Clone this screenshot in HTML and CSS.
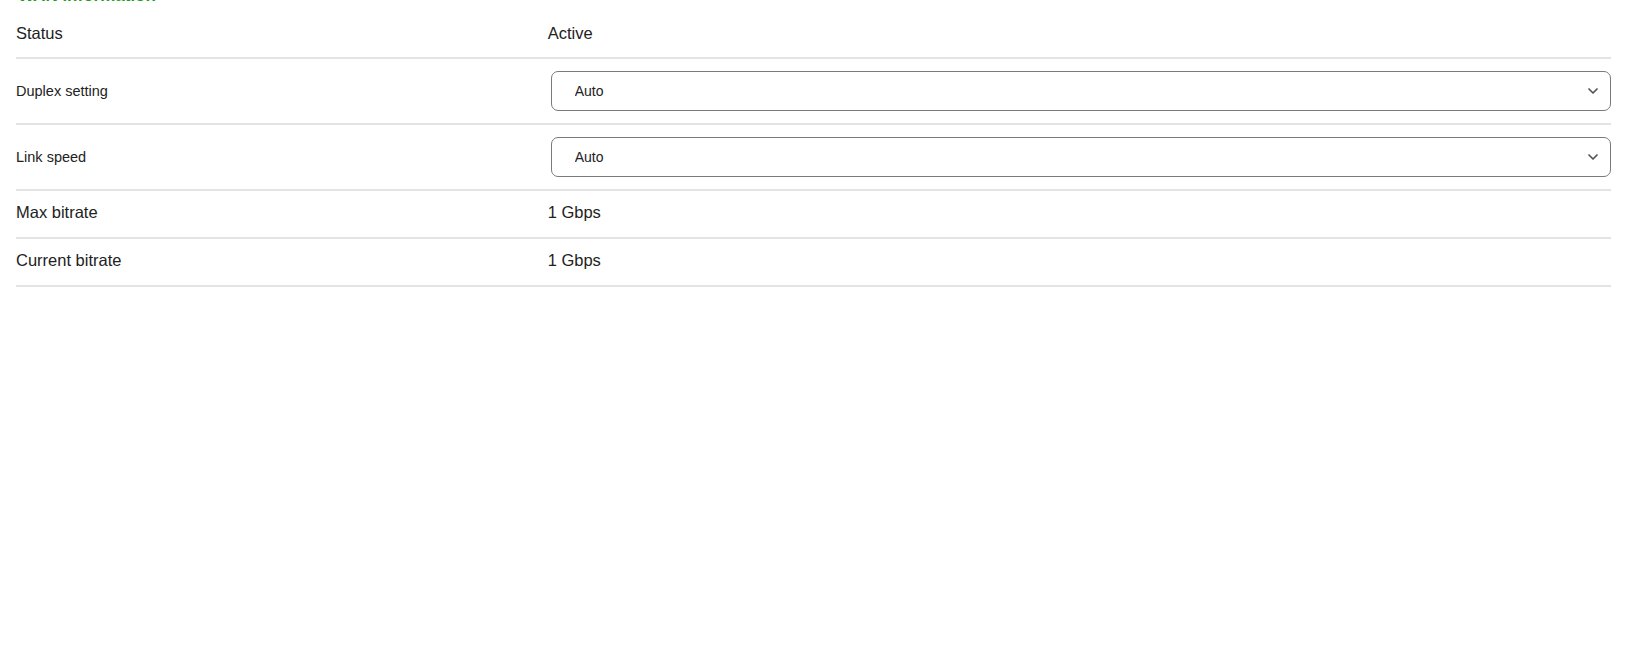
FILE: index.html
```html
<!DOCTYPE html>
<html lang="en">
<head>
    <meta charset="UTF-8">
    <meta name="viewport" content="width=device-width, initial-scale=1.0">
    <title>WAN information</title>
    <link rel="stylesheet" href="styles.css">
</head>
<body>
    <h2 class="section-title">WAN information</h2>

    <div class="info-table">
        <div class="info-row info-row-first">
            <div class="info-label">Status</div>
            <div class="info-value">Active</div>
        </div>

        <div class="info-row info-row-field">
            <label class="info-label info-label-small" for="duplex">Duplex setting</label>
            <div class="select-wrap">
                <select id="duplex" class="field-select">
                    <option>Auto</option>
                    <option>Full duplex</option>
                    <option>Half duplex</option>
                </select>
                <svg class="chevron" width="10" height="6" viewBox="0 0 10 6">
                    <path d="M1 1 L5 5 L9 1" fill="none" stroke="#555" stroke-width="1.7" stroke-linecap="round" stroke-linejoin="round"/>
                </svg>
            </div>
        </div>

        <div class="info-row info-row-field">
            <label class="info-label info-label-small" for="speed">Link speed</label>
            <div class="select-wrap">
                <select id="speed" class="field-select">
                    <option>Auto</option>
                    <option>10 Mbps</option>
                    <option>100 Mbps</option>
                    <option>1 Gbps</option>
                </select>
                <svg class="chevron" width="10" height="6" viewBox="0 0 10 6">
                    <path d="M1 1 L5 5 L9 1" fill="none" stroke="#555" stroke-width="1.7" stroke-linecap="round" stroke-linejoin="round"/>
                </svg>
            </div>
        </div>

        <div class="info-row">
            <div class="info-label">Max bitrate</div>
            <div class="info-value">1 Gbps</div>
        </div>

        <div class="info-row">
            <div class="info-label">Current bitrate</div>
            <div class="info-value">1 Gbps</div>
        </div>
    </div>
</body>
</html>
```

FILE: styles.css
```css
body {
    margin: 0;
    padding: 0 15px 0 16px;
    background: #ffffff;
    color: #222222;
    font-family: "Liberation Sans", Arial, sans-serif;
}

.section-title {
    margin: -14px 0 5px 2px;
    font-size: 17px;
    line-height: 20px;
    font-weight: bold;
    color: #1a9e1a;
}

.info-table {
    display: flex;
    flex-direction: column;
}

.info-row {
    display: grid;
    grid-template-columns: 1fr 2fr;
    align-items: center;
    padding: 12px 0 15px;
    border-bottom: 2px solid #e4e4e4;
    font-size: 16.5px;
    line-height: 19px;
}

.info-row-first {
    padding: 13px 0 14px;
}

.info-row-field {
    padding: 12px 0;
}

.info-label-small {
    font-size: 14.5px;
}

.select-wrap {
    position: relative;
    margin-left: 3px;
}

.field-select {
    width: 100%;
    height: 40px;
    padding: 0 36px 0 23px;
    border: 1px solid #7a7a7a;
    border-radius: 7px;
    background: #ffffff;
    color: #222222;
    font-family: "Liberation Sans", Arial, sans-serif;
    font-size: 14px;
    appearance: none;
    -webkit-appearance: none;
    display: block;
}

.chevron {
    position: absolute;
    right: 13px;
    top: 17px;
    pointer-events: none;
}
```
